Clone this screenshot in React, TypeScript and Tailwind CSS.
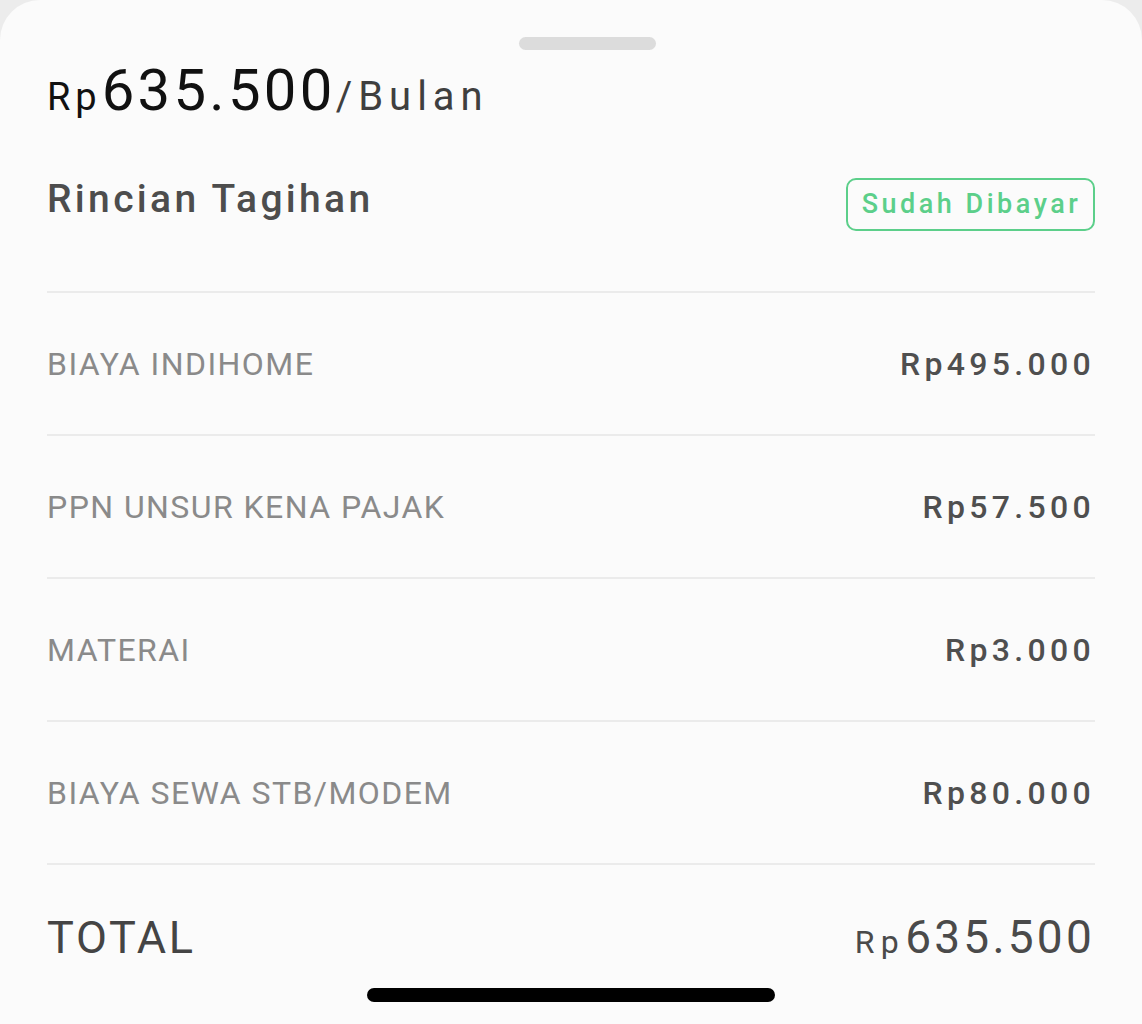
import * as React from "react";

type Item = {
  label: string;
  amount: string;
};

const items: Item[] = [
  { label: "BIAYA INDIHOME", amount: "Rp495.000" },
  { label: "PPN UNSUR KENA PAJAK", amount: "Rp57.500" },
  { label: "MATERAI", amount: "Rp3.000" },
  { label: "BIAYA SEWA STB/MODEM", amount: "Rp80.000" },
];

const Divider = () => <div className="h-[2px] w-full bg-[#ebebeb]" />;

const BillRow = ({ label, amount }: Item) => (
  <div className="flex h-[141px] items-center justify-between">
    <span className="text-[32px] leading-none tracking-[0.045em] text-[#8a8a8a]">{label}</span>
    <span className="text-[32px] font-medium leading-none tracking-[0.135em] text-[#4f4f4f]">{amount}</span>
  </div>
);

export default function App() {
  return (
    <div className="min-h-screen bg-[#ececec] font-['Roboto',sans-serif]">
      <div className="relative flex h-[1024px] flex-col overflow-hidden rounded-t-[40px] bg-[#fbfbfb] px-[47px]">
        {/* grabber */}
        <div className="ml-[472px] mt-[37px] h-[13px] w-[137px] rounded-full bg-[#dcdcdc]" />

        {/* price */}
        <div className="mt-[11px] flex items-baseline leading-none">
          <span className="text-[38px] tracking-[0.13em] text-[#111]">Rp</span>
          <span className="text-[58px] tracking-[0.057em] text-[#111]">635.500</span>
          <span className="text-[40px] tracking-[0.15em] text-[#3f3f3f]">/Bulan</span>
        </div>

        {/* header */}
        <div className="mt-[59px] flex items-start justify-between">
          <span className="mt-[2px] text-[39px] font-medium leading-none tracking-[0.085em] text-[#4d4d4d]">
            Rincian Tagihan
          </span>
          <div className="flex h-[53px] w-[249px] items-center justify-center rounded-[10px] border-2 border-[#5ccf8a] pl-[2px] text-[27px] font-medium leading-none tracking-[0.13em] text-[#5ccf8a]">
            Sudah Dibayar
          </div>
        </div>

        <div className="mt-[60px]">
          {items.map((item) => (
            <React.Fragment key={item.label}>
              <Divider />
              <BillRow {...item} />
            </React.Fragment>
          ))}
          <Divider />
          <div className="flex h-[144px] items-center justify-between">
            <span className="text-[45px] leading-none tracking-[0.06em] text-[#444]">TOTAL</span>
            <span className="flex items-baseline leading-none text-[#4a4a4a]">
              <span className="text-[32px] tracking-[0.2em]">Rp</span>
              <span className="text-[46px] tracking-[0.07em]">635.500</span>
            </span>
          </div>
        </div>

        {/* home indicator */}
        <div className="absolute bottom-[22px] left-[367px] h-[14px] w-[408px] rounded-full bg-black" />
      </div>
    </div>
  );
}
